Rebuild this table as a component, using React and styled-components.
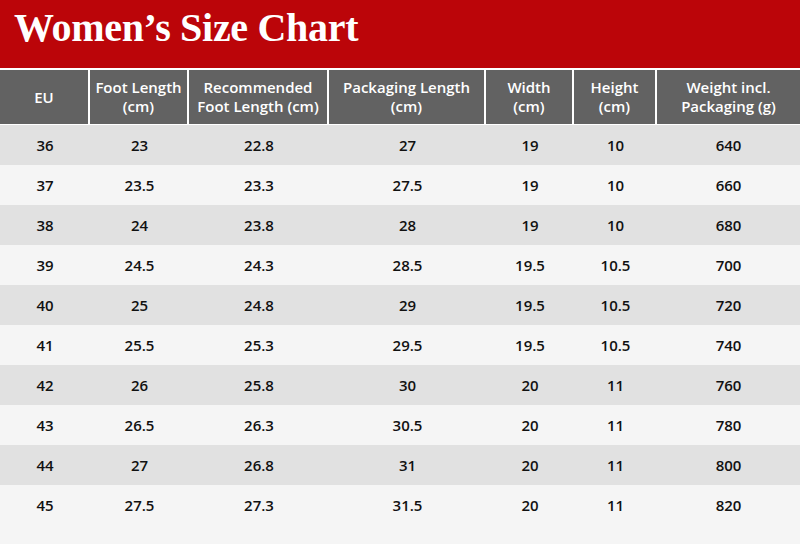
import React from 'react';
import styled, { createGlobalStyle } from 'styled-components';

const GlobalStyle = createGlobalStyle`
  html, body {
    margin: 0;
    padding: 0;
    background: #f5f5f5;
  }
`;

const COLUMNS = '90px 99px 140px 157px 88px 83px 143px';

const Page = styled.div`
  width: 800px;
  height: 544px;
  background: #f5f5f5;
  overflow: hidden;
  font-family: 'Open Sans', 'Liberation Sans', sans-serif;
`;

const Banner = styled.div`
  height: 68px;
  background: #bb0509;
  padding-left: 14px;
  border-bottom: 2px solid #ffffff;
`;

const Title = styled.h1`
  margin: 0;
  font-family: 'Liberation Serif', 'Times New Roman', serif;
  font-weight: 700;
  font-size: 40px;
  letter-spacing: -0.3px;
  line-height: 56px;
  color: #ffffff;
`;

const Row = styled.div`
  display: grid;
  grid-template-columns: ${COLUMNS};
  height: 40px;
  background: ${(p) => (p.$shade ? '#e1e1e1' : '#f5f5f5')};
`;

const HeadRow = styled.div`
  display: grid;
  grid-template-columns: ${COLUMNS};
  height: 54px;
  background: #ffffff;
  border-bottom: 1px solid #ffffff;
`;

const HeadCell = styled.div`
  display: flex;
  align-items: center;
  justify-content: center;
  text-align: center;
  background: #626262;
  color: #ffffff;
  font-weight: 600;
  font-size: 15px;
  line-height: 19px;
  margin-right: ${(p) => (p.$last ? '0' : '2px')};
`;

const Cell = styled.div`
  display: flex;
  align-items: center;
  justify-content: center;
  color: #111111;
  font-weight: 600;
  font-size: 15px;
`;

const headers = [
  ['EU'],
  ['Foot Length', '(cm)'],
  ['Recommended', 'Foot Length (cm)'],
  ['Packaging Length', '(cm)'],
  ['Width', '(cm)'],
  ['Height', '(cm)'],
  ['Weight incl.', 'Packaging (g)'],
];

const rows = [
  ['36', '23', '22.8', '27', '19', '10', '640'],
  ['37', '23.5', '23.3', '27.5', '19', '10', '660'],
  ['38', '24', '23.8', '28', '19', '10', '680'],
  ['39', '24.5', '24.3', '28.5', '19.5', '10.5', '700'],
  ['40', '25', '24.8', '29', '19.5', '10.5', '720'],
  ['41', '25.5', '25.3', '29.5', '19.5', '10.5', '740'],
  ['42', '26', '25.8', '30', '20', '11', '760'],
  ['43', '26.5', '26.3', '30.5', '20', '11', '780'],
  ['44', '27', '26.8', '31', '20', '11', '800'],
  ['45', '27.5', '27.3', '31.5', '20', '11', '820'],
];

const App = () => (
  <Page>
    <GlobalStyle />
    <Banner>
      <Title>Women’s Size Chart</Title>
    </Banner>
    <HeadRow>
      {headers.map((lines, i) => (
        <HeadCell key={i} $last={i === headers.length - 1}>
          <span>
            {lines.map((l, j) => (
              <React.Fragment key={j}>
                {j > 0 && <br />}
                {l}
              </React.Fragment>
            ))}
          </span>
        </HeadCell>
      ))}
    </HeadRow>
    {rows.map((r, i) => (
      <Row key={r[0]} $shade={i % 2 === 0}>
        {r.map((v, j) => (
          <Cell key={j}>{v}</Cell>
        ))}
      </Row>
    ))}
  </Page>
);

export default App;
